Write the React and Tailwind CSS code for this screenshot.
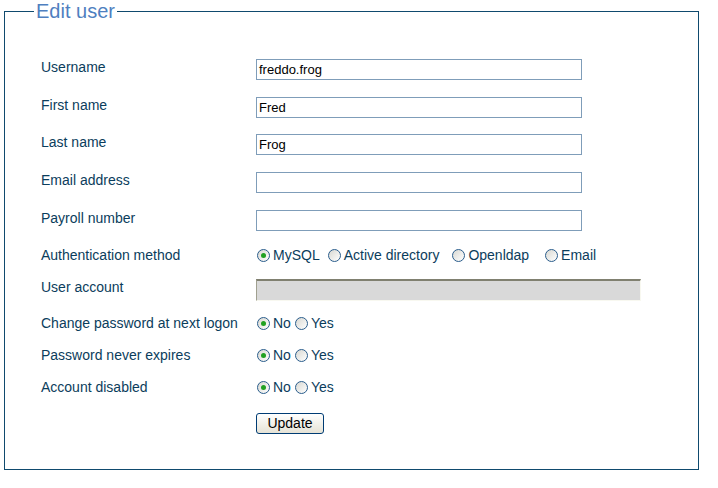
import React from 'react';

const font = { fontFamily: '"Liberation Sans", Arial, sans-serif' };

const Radio = ({ checked, label, className = '' }) => (
  <label className={`flex h-4 items-center leading-4 ${className}`}>
    <span className="flex h-[13px] w-[13px] shrink-0 items-center justify-center rounded-full border border-[#2a5d8c] bg-gradient-to-br from-[#d8d8d2] to-white">
      {checked && <span className="h-[5px] w-[5px] rounded-full bg-[#21a121]" />}
    </span>
    <span className="ml-[3px]">{label}</span>
  </label>
);

const TextRow = ({ label, value, className = '' }) => (
  <div className={`flex items-start ${className}`}>
    <div className="w-[251px] pl-[36px] leading-4">{label}</div>
    <div className="h-[21px] w-[326px] border border-[#7f9db9] bg-white px-[2px] text-[13px] leading-[19px] text-black">
      {value}
    </div>
  </div>
);

const YesNo = ({ label, className = '' }) => (
  <div className={`flex h-4 items-center leading-4 ${className}`}>
    <div className="w-[252px] pl-[36px]">{label}</div>
    <Radio checked label="No" />
    <Radio label="Yes" className="ml-[4px]" />
  </div>
);

export default function App() {
  return (
    <div className="h-[488px] w-[718px] bg-white" style={font}>
      <fieldset className="ml-[4px] w-[695px] border border-[#0f4a6e] pb-[35px] text-[14px] leading-4 text-[#0b3d5c]">
        <legend className="ml-[29px] px-[2px] text-[20px] leading-[22px] text-[#4f7fbf]">Edit user</legend>
        <div className="flex flex-col pt-[37px]">
          <TextRow label="Username" value="freddo.frog" />
          <TextRow label="First name" value="Fred" className="mt-[17px]" />
          <TextRow label="Last name" value="Frog" className="mt-[16px]" />
          <TextRow label="Email address" value="" className="mt-[17px]" />
          <TextRow label="Payroll number" value="" className="mt-[17px]" />

          <div className="mt-[16px] flex h-4 items-center leading-4">
            <div className="w-[252px] pl-[36px]">Authentication method</div>
            <Radio checked label="MySQL" />
            <Radio label="Active directory" className="ml-[8px]" />
            <Radio label="Openldap" className="ml-[13px]" />
            <Radio label="Email" className="ml-[16px]" />
          </div>

          <div className="mt-[16px] flex items-start">
            <div className="w-[251px] pl-[36px] leading-4">User account</div>
            <div className="h-[22px] w-[385px] border-t-2 border-l border-r border-b border-t-[#808070] border-l-[#a0a090] border-r-[#f8f8f0] border-b-[#f8f8f0] bg-[#d9d9d9]" />
          </div>

          <YesNo label="Change password at next logon" className="mt-[14px]" />
          <YesNo label="Password never expires" className="mt-[16px]" />
          <YesNo label="Account disabled" className="mt-[16px]" />

          <div className="mt-[18px] flex">
            <div className="w-[251px]" />
            <button className="h-[21px] w-[68px] rounded-[3px] border border-[#003c74] bg-gradient-to-b from-white to-[#e6e3d6] text-[14px] leading-[19px] text-black">
              Update
            </button>
          </div>
        </div>
      </fieldset>
    </div>
  );
}
